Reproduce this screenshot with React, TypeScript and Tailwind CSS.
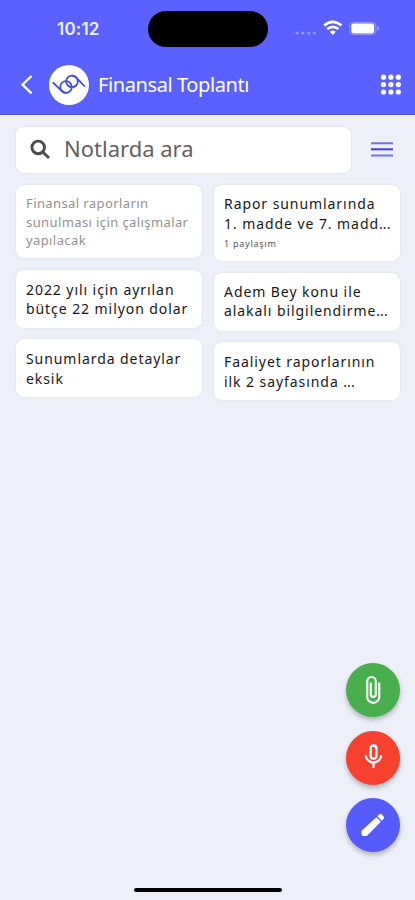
import type { ReactNode } from "react";

type Note = {
  lines: string[];
  shares?: string;
  muted?: boolean;
  className: string;
};

const leftNotes: Note[] = [
  {
    lines: ["Finansal raporların", "sunulması için çalışmalar", "yapılacak"],
    muted: true,
    className: "h-[73px] pt-[9px]",
  },
  { lines: ["2022 yılı için ayrılan", "bütçe 22 milyon dolar"], className: "h-[58px] pt-[10px]" },
  { lines: ["Sunumlarda detaylar", "eksik"], className: "h-[58px] pt-[10px]" },
];

const rightNotes: Note[] = [
  {
    lines: ["Rapor sunumlarında", "1. madde ve 7. madd..."],
    shares: "1 paylaşım",
    className: "h-[76px] pt-[9px]",
  },
  { lines: ["Adem Bey konu ile", "alakalı bilgilendirme..."], className: "h-[58px] pt-[9px]" },
  { lines: ["Faaliyet raporlarının", "ilk 2 sayfasında ..."], className: "h-[58px] pt-[10px]" },
];

function NoteCard({ note }: { note: Note }) {
  return (
    <div
      className={`bg-white rounded-[8px] px-[10px] shadow-[0_0_2px_rgba(90,85,50,0.15)] whitespace-nowrap ${note.className}`}
    >
      {note.lines.map((line) => (
        <p
          key={line}
          className={
            note.muted
              ? "text-[13px] leading-[18.5px] tracking-[0.4px] text-[#929292]"
              : "text-[14px] leading-[19.5px] tracking-[0.93px] text-[#171717]"
          }
        >
          {line.replace("...", "")}
          {line.endsWith("...") && <span className="tracking-[0.1px]">...</span>}
        </p>
      ))}
      {note.shares && (
        <p className="mt-[5px] text-[9px] leading-[12px] tracking-[0.75px] text-[#555]">{note.shares}</p>
      )}
    </div>
  );
}

function StatusBar() {
  return (
    <div className="h-[56px] flex items-start">
      <span className="w-[148px] pl-[57px] pt-[19px] font-['Inter'] text-[17px] leading-[21px] font-semibold tracking-[0.2px] text-[#edf0ff]">
        10:12
      </span>
      <div className="mt-[11px] w-[120px] h-[36px] rounded-full bg-black" />
      <svg className="mt-[19px] ml-[26px]" width="88" height="20" viewBox="0 0 88 20" fill="white">
        <g opacity="0.35">
          <circle cx="3" cy="14" r="1.6" />
          <circle cx="8.8" cy="14" r="1.6" />
          <circle cx="14.6" cy="14" r="1.6" />
          <circle cx="20.4" cy="14" r="1.6" />
        </g>
        <g fill="none" stroke="white" strokeWidth="2.6">
          <path d="M30.2 6.5q8.6-7.4 17.2 0" />
          <path d="M33.2 10.1q5.6-4.6 11.2 0" />
        </g>
        <path d="M38.8 16l-3-3.2q3-2.6 6 0z" />
        <rect x="55.5" y="3.4" width="26.5" height="12.2" rx="4" fill="none" stroke="white" opacity="0.35" />
        <rect x="57.2" y="4.6" width="23" height="9.8" rx="2.6" />
        <path d="M83.5 7.3q3 2.2 0 4.4z" opacity="0.5" />
      </svg>
    </div>
  );
}

function Header() {
  return (
    <header className="h-[115px] bg-[#5a61fe] border-b border-[#4a50dc]">
      <StatusBar />
      <div className="h-[58px] flex items-center pl-[20px] pr-[13px] text-white">
        <svg width="14" height="22" viewBox="0 0 14 22" fill="none" stroke="white" strokeWidth="2.4">
          <path d="M11.5 2L2.5 10.7l9 8.7" />
        </svg>
        <div className="ml-[15px] size-[40px] rounded-full bg-white">
          <svg width="40" height="40" viewBox="0 0 40 40" fill="none" stroke="#454be0" strokeWidth="1.8">
            <circle cx="17" cy="22" r="5.8" />
            <circle cx="23" cy="16.4" r="5.8" />
            <path d="M4.3 17.8l8.6 8.2q1.8 1.8 4.1 1.8M35.3 21l-8.2-8.6q-1.8-1.8-4.1-1.8" strokeLinecap="round" />
          </svg>
        </div>
        <h1 className="ml-[9px] flex-1 text-[20px] leading-[28px] tracking-[-0.4px] whitespace-nowrap">Finansal Toplantı</h1>
        <svg width="22" height="22" viewBox="0 0 22 22" fill="white">
          {[3.2, 10.6, 18].map((y) =>
            [3.5, 10.9, 18.3].map((x) => <circle key={`${x}-${y}`} cx={x} cy={y} r="2.6" />)
          )}
        </svg>
      </div>
    </header>
  );
}

function Fab({ label, className, children }: { label: string; className: string; children: ReactNode }) {
  return (
    <button
      aria-label={label}
      className={`size-[54px] rounded-full flex items-center justify-center text-white shadow-[0_3px_5px_rgba(0,0,0,0.26)] ${className}`}
    >
      {children}
    </button>
  );
}

export default function App() {
  return (
    <div className="relative w-[415px] h-[900px] overflow-hidden bg-[#edf0f9] font-['Noto_Sans','Open_Sans',sans-serif]">
      <Header />
      <main className="pl-[16px] pr-[15px] pt-[12px]">
        <div className="flex items-center">
          <div className="w-[335px] h-[46px] flex items-center rounded-[8px] bg-white pl-[14px] shadow-[0_0_2px_rgba(90,85,50,0.17)]">
            <svg width="22" height="22" viewBox="0 0 22 22" fill="none" stroke="#4b4b4b" strokeWidth="2.9">
              <circle cx="8.2" cy="8.4" r="6.3" />
              <path d="M12.8 13l6.2 6" />
            </svg>
            <span className="ml-[12px] -mt-[5px] text-[22px] leading-[30px] text-[#626262]">Notlarda ara</span>
          </div>
          <svg className="ml-[20px]" width="22" height="18" viewBox="0 0 22 18" strokeWidth="2.1">
            <path d="M0 2.2h22M0 14.5h22" stroke="#7072ee" />
            <path d="M0 8.3h22" stroke="#4444e4" />
          </svg>
        </div>

        <div className="mt-[12px] flex gap-[12px]">
          <div className="w-[186px] flex flex-col gap-[11.5px]">
            {leftNotes.map((note) => (
              <NoteCard key={note.lines[0]} note={note} />
            ))}
          </div>
          <div className="w-[186px] flex flex-col gap-[11.5px]">
            {rightNotes.map((note) => (
              <NoteCard key={note.lines[0]} note={note} />
            ))}
          </div>
        </div>
      </main>

      <div className="absolute left-[346px] top-[663px] flex flex-col gap-[13.5px]">
        <Fab label="Dosya ekle" className="bg-[#48ae4e]">
          <svg width="30" height="30" viewBox="0 0 24 24" fill="none" stroke="white" strokeWidth="1.7">
            <path d="M17 6v11.5a4.8 4.8 0 0 1-9.6 0V5a3.4 3.4 0 0 1 6.8 0v10.5a2 2 0 0 1-4 0V6" />
          </svg>
        </Fab>
        <Fab label="Ses kaydet" className="bg-[#f7412f]">
          <svg className="-mt-[2px]" width="29" height="29" viewBox="0 0 24 24" fill="none" stroke="white" strokeWidth="1.9">
            <rect x="9.6" y="2.9" width="4.8" height="10.8" rx="2.4" />
            <path d="M5.6 11a6.4 6 0 0 0 12.8 0M12 17v4.4" />
          </svg>
        </Fab>
        <Fab label="Not yaz" className="bg-[#565bfb]">
          <svg width="28" height="28" viewBox="0 0 28 28" fill="white">
            <path d="M16.5 6.9q.8-.7 1.6 0l3.1 3.1q.7.8 0 1.6L8.4 24.4q-.7.7-1.7.7H4.6q-2.1 0-2.1-2.1V21q0-1 .7-1.7z" />
            <path d="M18.3 5.2l1.7-1.7q1.4-1.3 2.8 0l1.7 1.7q1.4 1.4 0 2.8l-1.7 1.7z" />
          </svg>
        </Fab>
      </div>

      <div className="absolute left-[134px] top-[888px] w-[148px] h-[4px] rounded-full bg-black" />
    </div>
  );
}
